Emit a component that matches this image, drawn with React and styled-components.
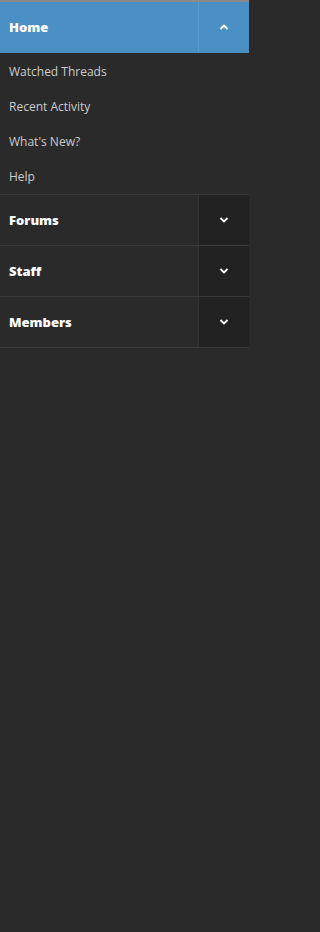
import React, { useState } from 'react';
import styled, { createGlobalStyle } from 'styled-components';

const GlobalStyle = createGlobalStyle`
  html, body {
    margin: 0;
    padding: 0;
    background: #2a2a2a;
  }
  * {
    box-sizing: border-box;
  }
`;

const SECTIONS = [
  {
    title: 'Home',
    links: ['Watched Threads', 'Recent Activity', "What's New?", 'Help'],
  },
  { title: 'Forums', links: [] },
  { title: 'Staff', links: [] },
  { title: 'Members', links: [] },
];

function Chevron({ up }) {
  return (
    <svg width="10" height="6" viewBox="0 0 10 6">
      <path
        d={up ? 'M1.5 5 L5 1.5 L8.5 5' : 'M1.5 1 L5 4.5 L8.5 1'}
        fill="none"
        stroke="#fff"
        strokeWidth="1.8"
      />
    </svg>
  );
}

function App() {
  const [open, setOpen] = useState('Home');

  const toggle = (title) => {
    setOpen(open === title ? null : title);
  };

  return (
    <>
      <GlobalStyle />
      <Panel>
        <TopEdge />
        {SECTIONS.map((section) => {
          const active = open === section.title;
          return (
            <Section key={section.title}>
              <Header active={active}>
                <HeaderLabel>{section.title}</HeaderLabel>
                <ToggleButton active={active} onClick={() => toggle(section.title)}>
                  <Chevron up={active} />
                </ToggleButton>
              </Header>
              {active && section.links.length > 0 && (
                <LinkList>
                  {section.links.map((link) => (
                    <LinkItem key={link}>{link}</LinkItem>
                  ))}
                </LinkList>
              )}
            </Section>
          );
        })}
      </Panel>
    </>
  );
}

const Panel = styled.nav`
  width: 249px;
  min-height: 932px;
  background: #2a2a2a;
  font-family: 'Open Sans', 'DejaVu Sans', sans-serif;
  display: flex;
  flex-direction: column;
`;

const TopEdge = styled.div`
  height: 2px;
  background: #8a8a8a;
`;

const Section = styled.div`
  display: flex;
  flex-direction: column;
`;

const Header = styled.div`
  display: flex;
  height: 51px;
  background: ${(p) => (p.active ? '#4a90c4' : '#2a2a2a')};
  border-bottom: 1px solid ${(p) => (p.active ? '#4a90c4' : '#3a3a3a')};
`;

const HeaderLabel = styled.div`
  flex: 1;
  display: flex;
  align-items: center;
  padding-left: 9px;
  font-size: 13px;
  font-weight: 800;
  color: #fff;
`;

const ToggleButton = styled.div`
  width: 51px;
  display: flex;
  align-items: center;
  justify-content: center;
  cursor: pointer;
  background: ${(p) => (p.active ? '#4a90c4' : '#222222')};
  border-left: 1px solid ${(p) => (p.active ? '#5a9dcd' : '#333333')};
`;

const LinkList = styled.div`
  display: flex;
  flex-direction: column;
  padding-top: 1px;
  border-bottom: 1px solid #3a3a3a;
`;

const LinkItem = styled.a`
  height: 35px;
  display: flex;
  align-items: center;
  padding-left: 9px;
  font-size: 12px;
  color: #cccccc;
  cursor: pointer;
`;

export default App;
